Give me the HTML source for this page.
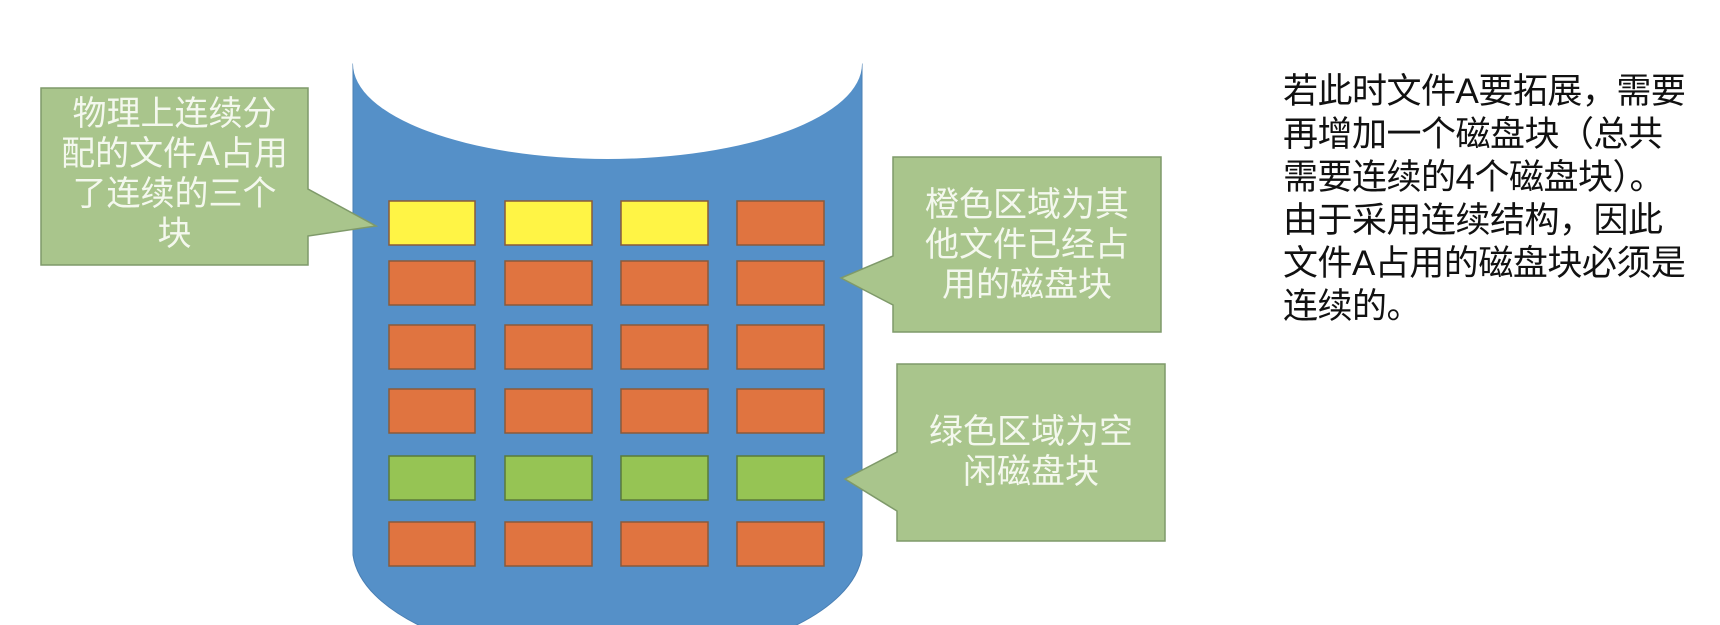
<!DOCTYPE html>
<html><head><meta charset="utf-8"><style>
html,body{margin:0;width:1720px;height:625px;overflow:hidden}
body{background:#fff;position:relative;font-family:"Liberation Sans","Noto Sans CJK SC",sans-serif}
.t{position:absolute;color:#f4f8ee;font-size:34px;line-height:40px;text-align:center}
.r{position:absolute;left:1283px;top:70px;font-size:35px;line-height:43px;color:#111;width:440px;letter-spacing:-0.5px}
</style></head><body>
<svg width="1720" height="625" style="position:absolute;left:0;top:0">
<path d="M353 64 V555 A255 115 0 0 0 862 555 V64 Z" fill="#5590c8" stroke="#4a7fb3" stroke-width="1"/>
<ellipse cx="607.5" cy="64" rx="254.5" ry="95" fill="#fff"/>
<g stroke="#8a5a3a" stroke-width="1.5">
<rect x="389" y="201" width="86" height="44" fill="#fff445"/>
<rect x="505" y="201" width="87" height="44" fill="#fff445"/>
<rect x="621" y="201" width="87" height="44" fill="#fff445"/>
<rect x="737" y="201" width="87" height="44" fill="#e07440"/>
<g fill="#e07440">
<rect x="389" y="261" width="86" height="44"/><rect x="505" y="261" width="87" height="44"/><rect x="621" y="261" width="87" height="44"/><rect x="737" y="261" width="87" height="44"/>
<rect x="389" y="325" width="86" height="44"/><rect x="505" y="325" width="87" height="44"/><rect x="621" y="325" width="87" height="44"/><rect x="737" y="325" width="87" height="44"/>
<rect x="389" y="389" width="86" height="44"/><rect x="505" y="389" width="87" height="44"/><rect x="621" y="389" width="87" height="44"/><rect x="737" y="389" width="87" height="44"/>
<rect x="389" y="522" width="86" height="44"/><rect x="505" y="522" width="87" height="44"/><rect x="621" y="522" width="87" height="44"/><rect x="737" y="522" width="87" height="44"/>
</g>
<g fill="#96c454" stroke="#5a7a3a">
<rect x="389" y="456" width="86" height="44"/><rect x="505" y="456" width="87" height="44"/><rect x="621" y="456" width="87" height="44"/><rect x="737" y="456" width="87" height="44"/>
</g>
</g>
<g fill="#a9c58c" stroke="#7f9a6a" stroke-width="1.5">
<path d="M41 88 H308 V189 L376 226 L308 236 V265 H41 Z"/>
<path d="M893 157 H1161 V332 H893 V305 L841 278 L893 256 Z"/>
<path d="M897 364 H1165 V541 H897 V511 L845 479 L897 452 Z"/>
</g>
</svg>
<div class="t" style="left:41px;top:94px;width:267px">物理上连续分<br>配的文件A占用<br>了连续的三个<br>块</div>
<div class="t" style="left:893px;top:185px;width:268px">橙色区域为其<br>他文件已经占<br>用的磁盘块</div>
<div class="t" style="left:897px;top:412px;width:268px">绿色区域为空<br>闲磁盘块</div>
<div class="r">若此时文件A要拓展，需要<br>再增加一个磁盘块（总共<br>需要连续的4个磁盘块）。<br>由于采用连续结构，因此<br>文件A占用的磁盘块必须是<br>连续的。</div>
</body></html>
